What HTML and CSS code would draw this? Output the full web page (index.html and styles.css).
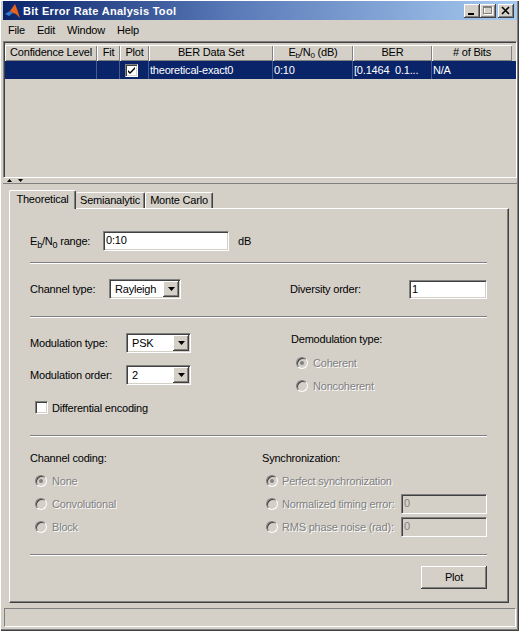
FILE: index.html
```html
<!DOCTYPE html>
<html>
<head>
<meta charset="utf-8">
<title>Bit Error Rate Analysis Tool</title>
<link rel="stylesheet" href="styles.css">
</head>
<body>
<div class="window">
  <div class="titlebar">
    <svg class="app-icon" width="16" height="16" viewBox="0 0 16 16">
      <path d="M0 11 L5 8 L8 10 L4 13 Z" fill="#3b78c8"/>
      <path d="M5 8 L10 1 L12 6 L15 15 L11 11 L8 10 Z" fill="#e8641e"/>
      <path d="M10 1 L12 6 L15 15 L13 8 Z" fill="#a8300a"/>
    </svg>
    <span class="title">Bit Error Rate Analysis Tool</span>
    <div class="title-buttons">
      <span class="tbtn"><svg width="16" height="14" viewBox="0 0 16 14"><rect x="4" y="9" width="6" height="2" fill="#000"/></svg></span>
      <span class="tbtn"><svg width="16" height="14" viewBox="0 0 16 14"><rect x="4.5" y="3.5" width="8" height="7" fill="none" stroke="#fff"/><rect x="3.5" y="2.5" width="8" height="7" fill="none" stroke="#808080"/><rect x="3" y="2" width="9" height="2" fill="#808080"/></svg></span>
      <span class="tbtn tbtn-close"><svg width="16" height="14" viewBox="0 0 16 14"><path d="M4 3 L11 10 M11 3 L4 10" stroke="#000" stroke-width="1.6" fill="none"/></svg></span>
    </div>
  </div>

  <div class="menubar">
    <span class="menu-item">File</span>
    <span class="menu-item">Edit</span>
    <span class="menu-item">Window</span>
    <span class="menu-item">Help</span>
  </div>

  <div class="table-wrap">
    <div class="thead">
      <div class="th c1">Confidence Level</div>
      <div class="th c2">Fit</div>
      <div class="th c3">Plot</div>
      <div class="th c4">BER Data Set</div>
      <div class="th c5">E<sub>b</sub>/N<sub>0</sub> (dB)</div>
      <div class="th c6">BER</div>
      <div class="th c7"># of Bits</div>
    </div>
    <div class="trow">
      <div class="td c1"></div>
      <div class="td c2"></div>
      <div class="td c3"><span class="cell-check"><svg width="9" height="9" viewBox="0 0 9 9"><path d="M1 4 L3 6 L8 1 L8 3 L3 8 L1 6 Z" fill="#000"/></svg></span></div>
      <div class="td c4">theoretical-exact0</div>
      <div class="td c5">0:10</div>
      <div class="td c6">[0.1464&nbsp; 0.1...</div>
      <div class="td c7">N/A</div>
    </div>
  </div>

  <div class="splitter">
    <svg width="5" height="3" viewBox="0 0 5 3" class="tri-up"><path d="M0 3 L2.5 0 L5 3 Z" fill="#000"/></svg>
    <svg width="5" height="3" viewBox="0 0 5 3" class="tri-down"><path d="M0 0 L5 0 L2.5 3 Z" fill="#000"/></svg>
  </div>

  <div class="lower">
    <div class="tabs">
      <div class="tab tab-active">Theoretical</div>
      <div class="tab tab-semi">Semianalytic</div>
      <div class="tab tab-mc">Monte Carlo</div>
    </div>
    <div class="tabpanel">
      <div class="row row-range">
        <span class="lbl lbl-range">E<sub>b</sub>/N<sub>0</sub> range:</span>
        <span class="input input-range">0:10</span>
        <span class="unit">dB</span>
      </div>
      <div class="sep sep1"></div>

      <div class="row row-channel">
        <div class="group-left">
          <span class="lbl lbl-channel">Channel type:</span>
          <span class="select select-channel"><span class="sel-val">Rayleigh</span><span class="sel-btn"><svg width="7" height="4" viewBox="0 0 7 4"><path d="M0 0 L7 0 L3.5 4 Z" fill="#000"/></svg></span></span>
        </div>
        <span class="lbl lbl-div">Diversity order:</span>
        <span class="input input-div">1</span>
      </div>
      <div class="sep sep2"></div>

      <div class="block block-mod">
        <div class="col col-mod">
          <div class="row row-sel">
            <span class="lbl lbl-mod">Modulation type:</span>
            <span class="select select-mod"><span class="sel-val">PSK</span><span class="sel-btn"><svg width="7" height="4" viewBox="0 0 7 4"><path d="M0 0 L7 0 L3.5 4 Z" fill="#000"/></svg></span></span>
          </div>
          <div class="row row-sel row-sel2">
            <span class="lbl lbl-mod">Modulation order:</span>
            <span class="select select-mod"><span class="sel-val">2</span><span class="sel-btn"><svg width="7" height="4" viewBox="0 0 7 4"><path d="M0 0 L7 0 L3.5 4 Z" fill="#000"/></svg></span></span>
          </div>
          <div class="row row-check">
            <span class="checkbox"></span>
            <span class="lbl">Differential encoding</span>
          </div>
        </div>
        <div class="col col-demod">
          <div class="heading">Demodulation type:</div>
          <div class="radio-row radio-row-demod"><span class="radio checked"></span><span class="dis">Coherent</span></div>
          <div class="radio-row radio-row-demod"><span class="radio"></span><span class="dis">Noncoherent</span></div>
        </div>
      </div>
      <div class="sep sep3"></div>

      <div class="block block-coding">
        <div class="col col-coding">
          <div class="heading">Channel coding:</div>
          <div class="opt-row first"><span class="radio checked"></span><span class="dis">None</span></div>
          <div class="opt-row"><span class="radio"></span><span class="dis">Convolutional</span></div>
          <div class="opt-row"><span class="radio"></span><span class="dis">Block</span></div>
        </div>
        <div class="col col-sync">
          <div class="heading">Synchronization:</div>
          <div class="opt-row first"><span class="radio checked"></span><span class="dis">Perfect synchronization</span></div>
          <div class="opt-row"><span class="radio"></span><span class="dis sync-lbl">Normalized timing error:</span><span class="input input-sync">0</span></div>
          <div class="opt-row"><span class="radio"></span><span class="dis sync-lbl">RMS phase noise (rad):</span><span class="input input-sync">0</span></div>
        </div>
      </div>
      <div class="sep sep4"></div>

      <div class="actions">
        <span class="button">Plot</span>
      </div>
    </div>
  </div>

  <div class="statusbar"></div>
</div>
</body>
</html>
```

FILE: styles.css
```css
html, body {
  margin: 0;
  padding: 0;
}
body {
  width: 519px;
  height: 631px;
  overflow: hidden;
  background: #d4d0c8;
  font-family: "Liberation Sans", Arial, sans-serif;
  font-size: 11px;
  letter-spacing: -0.2px;
  color: #000;
}
sub {
  font-size: 9px;
  line-height: 0;
  vertical-align: -3px;
}

.window {
  box-sizing: border-box;
  width: 519px;
  height: 631px;
  padding: 1px 2px 3px 3px;
  display: flex;
  flex-direction: column;
  background: #d4d0c8;
  box-shadow: inset 1px 1px 0 #ffffff, inset -1px -1px 0 #404040, inset -2px -2px 0 #808080;
}

/* Title bar */
.titlebar {
  height: 19px;
  flex: none;
  display: flex;
  align-items: center;
  background: linear-gradient(to right, #0a246a 0%, #5a7ab8 45%, #a6caf0 100%);
  color: #fff;
  font-weight: bold;
}
.app-icon {
  margin-left: 2px;
  flex: none;
}
.title {
  margin-left: 2px;
  white-space: nowrap;
  letter-spacing: 0.3px;
}
.title-buttons {
  margin-left: auto;
  display: flex;
  padding-right: 3px;
}
.tbtn {
  width: 16px;
  height: 14px;
  display: block;
  background: #d4d0c8;
  box-shadow: inset -1px -1px 0 #404040, inset 1px 1px 0 #ffffff, inset -2px -2px 0 #808080;
}
.tbtn svg {
  display: block;
}
.tbtn-close {
  margin-left: 2px;
}

/* Menu */
.menubar {
  height: 20px;
  flex: none;
  display: flex;
  align-items: center;
  margin-left: -1px;
}
.menu-item {
  padding: 0 6px;
}

/* Table */
.table-wrap {
  flex: none;
  box-sizing: border-box;
  height: 137px;
  margin-top: 1px;
  padding: 3px 0 0 1px;
  border-top: 1px solid #808080;
  border-left: 1px solid #808080;
  border-bottom: 1px solid #ffffff;
  border-right: 1px solid #ffffff;
  box-shadow: inset 1px 1px 0 #404040, inset -1px -1px 0 #d4d0c8;
}
.thead, .trow {
  display: flex;
}
.c1 { width: 92px; }
.c2 { width: 23px; }
.c3 { width: 29px; }
.c4 { width: 124px; }
.c5 { width: 80px; }
.c6 { width: 79px; }
.c7 { width: 80px; }
.th {
  box-sizing: border-box;
  height: 16px;
  line-height: 15px;
  text-align: center;
  white-space: nowrap;
  overflow: hidden;
  background: #d4d0c8;
  box-shadow: inset 1px 1px 0 #ffffff, inset -1px -1px 0 #808080;
}
.th sub {
  font-size: 8px;
  vertical-align: -2px;
}
.trow {
  background: #0a246a;
  color: #fff;
  height: 18px;
}
.td {
  box-sizing: border-box;
  height: 18px;
  line-height: 18px;
  padding-left: 1px;
  white-space: nowrap;
  overflow: hidden;
  border-right: 1px solid #4a5a8a;
}
.td.c7 {
  border-right: none;
}
.td.c3 {
  padding-left: 5px;
  padding-top: 3px;
}
.cell-check {
  display: flex;
  align-items: center;
  justify-content: center;
  box-sizing: border-box;
  width: 13px;
  height: 13px;
  background: #fff;
  border-top: 1px solid #808080;
  border-left: 1px solid #808080;
  border-bottom: 1px solid #ffffff;
  border-right: 1px solid #ffffff;
  box-shadow: inset 1px 1px 0 #404040, inset -1px -1px 0 #d4d0c8;
}
.cell-check svg {
  display: block;
}

/* Splitter */
.splitter {
  flex: none;
  height: 5px;
  display: flex;
  align-items: flex-end;
  padding-left: 4px;
}
.splitter svg {
  display: block;
  margin-bottom: 1px;
}
.tri-down {
  margin-left: 6px;
}

/* Lower panel */
.lower {
  flex: none;
  border-top: 1px solid #808080;
  padding: 6px 0 0 6px;
}
.tabs {
  display: flex;
  align-items: flex-end;
  height: 18px;
}
.tab {
  box-sizing: border-box;
  height: 16px;
  line-height: 15px;
  text-align: center;
  background: #d4d0c8;
  border-top: 1px solid #ffffff;
  border-left: 1px solid #ffffff;
  border-right: 1px solid #404040;
  border-radius: 2px 2px 0 0;
  box-shadow: inset -1px 0 0 #808080;
}
.tab-active {
  position: relative;
  z-index: 1;
  width: 67px;
  height: 19px;
  line-height: 17px;
  margin-bottom: -1px;
}
.tab-semi {
  width: 69px;
  border-left: none;
}
.tab-mc {
  width: 68px;
}

.tabpanel {
  box-sizing: border-box;
  width: 500px;
  height: 395px;
  padding: 22px 21px 0 20px;
  display: flex;
  flex-direction: column;
  border-top: 1px solid #ffffff;
  border-left: 1px solid #ffffff;
  border-right: 1px solid #404040;
  border-bottom: 1px solid #404040;
  box-shadow: inset -1px -1px 0 #808080;
}

.row {
  display: flex;
  align-items: center;
}
.row-range {
  height: 20px;
}
.lbl-range {
  width: 73px;
}
.input {
  box-sizing: border-box;
  height: 20px;
  line-height: 16px;
  padding-left: 2px;
  background: #fff;
  border-top: 1px solid #808080;
  border-left: 1px solid #808080;
  border-bottom: 1px solid #ffffff;
  border-right: 1px solid #ffffff;
  box-shadow: inset 1px 1px 0 #404040, inset -1px -1px 0 #d4d0c8;
}
.input-range {
  width: 126px;
}
.unit {
  margin-left: 9px;
}

.sep {
  flex: none;
  height: 0;
  border-top: 1px solid #808080;
  border-bottom: 1px solid #ffffff;
}
.sep1 { margin-top: 11px; }
.sep2 { margin-top: 17px; }
.sep3 { margin-top: 21px; }
.sep4 { margin-top: 18px; }

.row-channel {
  margin-top: 15px;
  height: 20px;
}
.group-left {
  width: 260px;
  display: flex;
  align-items: center;
}
.lbl-channel {
  width: 79px;
}
.lbl-div {
  width: 119px;
}
.input-div {
  width: 78px;
  height: 19px;
}

.select {
  box-sizing: border-box;
  height: 20px;
  display: flex;
  background: #fff;
  border-top: 1px solid #808080;
  border-left: 1px solid #808080;
  border-bottom: 1px solid #ffffff;
  border-right: 1px solid #ffffff;
  box-shadow: inset 1px 1px 0 #404040, inset -1px -1px 0 #d4d0c8;
  padding: 1px;
}
.select-channel { width: 72px; }
.select-mod { width: 65px; }
.sel-val {
  flex: 1;
  line-height: 16px;
  padding-left: 4px;
}
.sel-btn {
  width: 16px;
  height: 16px;
  display: flex;
  align-items: center;
  justify-content: center;
  background: #d4d0c8;
  box-shadow: inset -1px -1px 0 #404040, inset 1px 1px 0 #ffffff, inset -2px -2px 0 #808080;
}
.sel-btn svg {
  display: block;
}

.block {
  display: flex;
}
.block-mod {
  margin-top: 15px;
}
.col-mod {
  width: 261px;
  display: flex;
  flex-direction: column;
}
.row-sel {
  height: 20px;
}
.row-sel2 {
  margin-top: 12px;
}
.lbl-mod {
  width: 96px;
}
.row-check {
  margin-top: 16px;
  height: 13px;
}
.checkbox {
  box-sizing: border-box;
  width: 13px;
  height: 13px;
  margin-left: 5px;
  margin-right: 4px;
  background: #fff;
  border-top: 1px solid #808080;
  border-left: 1px solid #808080;
  border-bottom: 1px solid #ffffff;
  border-right: 1px solid #ffffff;
  box-shadow: inset 1px 1px 0 #404040, inset -1px -1px 0 #d4d0c8;
}

.heading {
  height: 13px;
  line-height: 13px;
}
.radio-row {
  display: flex;
  align-items: center;
  height: 13px;
}
.radio-row-demod {
  margin-top: 10px;
}
.col-demod .radio {
  margin-left: 5px;
}

.radio {
  position: relative;
  flex: none;
  box-sizing: border-box;
  width: 12px;
  height: 12px;
  margin-right: 5px;
  border-radius: 50%;
  background: #d4d0c8;
  border-top: 1px solid #808080;
  border-left: 1px solid #808080;
  border-bottom: 1px solid #ffffff;
  border-right: 1px solid #ffffff;
  box-shadow: inset 1px 1px 0 #404040, inset -1px -1px 0 #d4d0c8;
}
.radio.checked::after {
  content: "";
  position: absolute;
  left: 3px;
  top: 3px;
  width: 4px;
  height: 4px;
  border-radius: 50%;
  background: #808080;
}
.dis {
  color: #808080;
  text-shadow: 1px 1px 0 #ffffff;
  white-space: nowrap;
}

.block-coding {
  margin-top: 15px;
}
.col-coding {
  width: 232px;
  display: flex;
  flex-direction: column;
}
.col-coding .radio {
  margin-left: 5px;
}
.col-sync {
  flex: 1;
  display: flex;
  flex-direction: column;
}
.col-sync .radio {
  margin-left: 4px;
  margin-right: 4px;
}
.opt-row {
  display: flex;
  align-items: center;
  height: 19px;
  margin-top: 4px;
}
.opt-row.first {
  margin-top: 6px;
}
.sync-lbl {
  width: 119px;
}
.input-sync {
  width: 86px;
  height: 20px;
  background: #d4d0c8;
  color: #808080;
}

.actions {
  display: flex;
  justify-content: flex-end;
  margin-top: 10px;
}
.button {
  box-sizing: border-box;
  width: 66px;
  height: 23px;
  line-height: 22px;
  text-align: center;
  background: #d4d0c8;
  box-shadow: inset -1px -1px 0 #404040, inset 1px 1px 0 #ffffff, inset -2px -2px 0 #808080;
}

.statusbar {
  flex: none;
  box-sizing: border-box;
  height: 19px;
  margin: 5px 1px 0 1px;
  border-top: 1px solid #808080;
  border-left: 1px solid #808080;
  border-bottom: 1px solid #ffffff;
  border-right: 1px solid #ffffff;
}
```
